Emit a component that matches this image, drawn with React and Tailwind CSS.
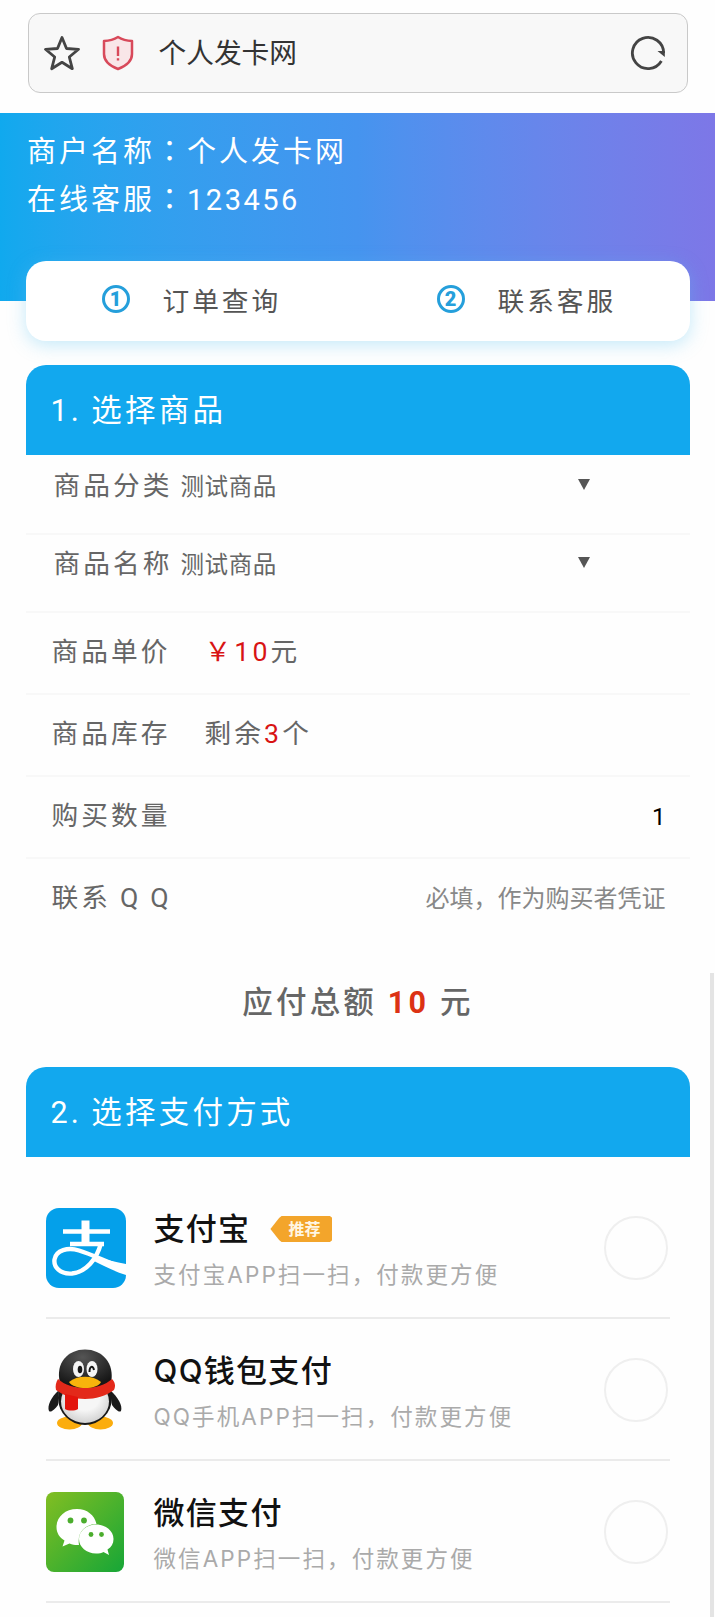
const fields = [
  { label: '商品分类', value: '测试商品' },
  { label: '商品名称', value: '测试商品' },
];

const payments = [
  { id: 'alipay', icon: AlipayIcon, name: '支付宝', desc: '支付宝APP扫一扫，付款更方便', recommended: true },
  { id: 'qq', icon: QQIcon, name: 'QQ钱包支付', desc: 'QQ手机APP扫一扫，付款更方便' },
  { id: 'wechat', icon: WechatIcon, name: '微信支付', desc: '微信APP扫一扫，付款更方便' },
];

function AlipayIcon() {
  return (
    <svg viewBox="0 0 80 80" className="h-20 w-20">
      <rect width="80" height="80" rx="13" fill="#04a0ea" />
      <g fill="none" stroke="#fff">
        <path d="M17 23.5H64M24 36H58" strokeWidth="4.4" />
        <path d="M39.5 12.5V36" strokeWidth="8" />
        <path d="M55 35C51 51 40 64 26 65.5C14 66.5 7.5 59 8.5 51.5C10 42 22 39 33 42.5C48 47 60 54 80 61" strokeWidth="4.4" />
      </g>
      <path d="M49 48C60 52 70 54 80 56V67C67 63 56 57 46 52Z" fill="#fff" />
    </svg>
  );
}

function QQIcon() {
  return (
    <svg viewBox="0 0 80 82" className="h-[82px] w-20">
      <defs>
        <radialGradient id="head" cx="45%" cy="20%" r="75%">
          <stop offset="0" stopColor="#555" />
          <stop offset="1" stopColor="#161616" />
        </radialGradient>
        <radialGradient id="belly" cx="50%" cy="40%" r="60%">
          <stop offset="0.5" stopColor="#f6f6f6" />
          <stop offset="1" stopColor="#d2d2d2" />
        </radialGradient>
      </defs>
      <ellipse cx="23.5" cy="74" rx="12.5" ry="6.5" fill="#fbad0e" />
      <ellipse cx="54.5" cy="74" rx="12.5" ry="6.5" fill="#fbad0e" />
      <path d="M13 41C5 48 1 57 3 62C5 64 9 60 12 56ZM64 41C72 48 77 57 75 62C73 64 69 60 66 56Z" fill="#1b1b1b" />
      <circle cx="39" cy="49" r="27" fill="#191919" />
      <ellipse cx="39" cy="52.5" rx="24" ry="21.5" fill="url(#belly)" />
      <path d="M14 34C9 14 22 0.5 39 0.5S69 14 65 34C55 41 24 41 14 34Z" fill="url(#head)" />
      <path d="M12 30C25 42 53 42 66 30C69 33 70 37 68 41C52 53 26 53 10 41C9 37 10 33 12 30Z" fill="#e3291a" />
      <path d="M19 45L32 48V60C29 62 22 62 19 60Z" fill="#e3140c" />
      <ellipse cx="32.5" cy="20" rx="5.5" ry="8" fill="#f5f5f5" />
      <ellipse cx="46" cy="20" rx="5.5" ry="8" fill="#f5f5f5" />
      <ellipse cx="34" cy="20.5" rx="2.3" ry="3.8" fill="#151515" />
      <path d="M43.5 23C43.5 17 47 16 48 21" fill="none" stroke="#151515" strokeWidth="2" />
      <path d="M23 33C31 26 47 26 55 33C51 41 28 41 23 33Z" fill="#f8b40c" />
    </svg>
  );
}

function WechatIcon() {
  return (
    <svg viewBox="0 0 78 80" className="h-20 w-[78px]">
      <defs>
        <linearGradient id="wx" x1="0" y1="0" x2="1" y2="1">
          <stop offset="0" stopColor="#82be22" />
          <stop offset="1" stopColor="#16a637" />
        </linearGradient>
      </defs>
      <rect width="78" height="80" rx="8" fill="url(#wx)" />
      <path d="M31 17C19 17 10.5 25 10.5 35C10.5 41 13.5 45.5 18.5 48.5L16.5 54.5L23.5 51.5C27 53 30 53.2 33 53C31 41 38 32.5 50.5 32C48.5 23 41 17 31 17Z" fill="#fff" />
      <path d="M50 32.5C40.5 32.5 33 39 33 47S40.5 61.5 50 61.5C53 61.5 55.5 61 57.5 60L63 63L61.5 57.5C65.5 55 67.5 51.5 67.5 47C67.5 39 60 32.5 50 32.5Z" fill="#fff" />
      <g fill="#4bad2d">
        <circle cx="24.5" cy="28.5" r="2.9" />
        <circle cx="38" cy="28.5" r="2.9" />
        <circle cx="45" cy="42.5" r="2.4" />
        <circle cx="55.5" cy="42.5" r="2.4" />
      </g>
    </svg>
  );
}

function AddressBar() {
  return (
    <div className="mx-auto mt-[13px] mb-5 flex h-20 w-[660px] shrink-0 items-center rounded-xl border border-[#c9c9c9] bg-[#f8f8f8] pr-[21px] pl-[15px]">
      <svg viewBox="0 0 36 36" className="h-9 w-9" fill="none" stroke="#444" strokeWidth="2.8" strokeLinejoin="round">
        <path d="M18 2.5L22.5 13.5L34.5 14.3L25.3 22L28.3 33.7L18 27.3L7.7 33.7L10.7 22L1.5 14.3L13.5 13.5Z" />
      </svg>
      <svg viewBox="0 0 32 36" className="ml-[22px] h-9 w-8">
        <path d="M16 2C20 4.5 25 5.8 30 6V19C30 26.5 24 31 16 34C8 31 2 26.5 2 19V6C7 5.8 12 4.5 16 2Z" fill="#f9e6e8" stroke="#d8495a" strokeWidth="2.5" strokeLinejoin="round" />
        <path d="M16 11.5V21M16 23.3V25.5" stroke="#d8495a" strokeWidth="2.4" />
      </svg>
      <span className="ml-[25px] flex-1 pt-0.5 text-[27.7px] leading-[40px] text-[#333]">个人发卡网</span>
      <svg viewBox="0 0 36 36" className="h-9 w-9">
        <path d="M31.4 26A15.6 15.6 0 1 1 33.6 18" fill="none" stroke="#444" strokeWidth="2.8" />
        <path d="M27.5 16H34.8V22Z" fill="#444" />
      </svg>
    </div>
  );
}

function QuickLink({ num, text }) {
  return (
    <div className="flex w-[335px] shrink-0 items-center">
      <span className="-mt-1 flex h-7 w-7 items-center justify-center rounded-full border-[3.5px] border-[#259fdb] text-[20px] leading-none font-black text-[#259fdb]">
        {num}
      </span>
      <span className="ml-[33px] pt-0.5 text-[26.7px] tracking-[3px] text-[#555]">{text}</span>
    </div>
  );
}

function SectionTitle({ children }) {
  return (
    <h2 className="flex h-[90px] items-center rounded-t-[20px] bg-[#12a8ee] pt-0.5 pl-[25px] text-[30.5px] tracking-[3.2px] [word-spacing:-1.5px] text-white">
      {children}
    </h2>
  );
}

// full-width colon centred in its cell
function Colon() {
  return <span className="font-['Roboto','Noto_Sans_CJK_TC',sans-serif]">：</span>;
}

export default function App() {
  return (
    <div className="relative flex h-[1617px] w-[715px] flex-col overflow-hidden bg-[#fefefe] font-['Roboto','Noto_Sans_CJK_SC',sans-serif]">
      <AddressBar />

      <header className="h-[188px] shrink-0 bg-linear-to-r from-[#10a9ee] via-[#4594ef] to-[#7d77e7] pt-[15px] pl-[27px] text-[29px] leading-[48px] tracking-[3px] text-white">
        <p>商户名称<Colon />个人发卡网</p>
        <p>在线客服<Colon /><span className="tracking-[2.5px]">123456</span></p>
      </header>

      <nav className="mx-auto -mt-10 flex h-20 w-[664px] shrink-0 items-center rounded-[20px] bg-white pl-[76px] shadow-[0_4px_18px_rgba(90,195,240,0.35)]">
        <QuickLink num="1" text="订单查询" />
        <QuickLink num="2" text="联系客服" />
      </nav>

      <main className="mx-auto mt-6 w-[664px] text-[26.7px] tracking-[3.1px] text-[#666]">
        <SectionTitle>1. 选择商品</SectionTitle>

        {fields.map((f, i) => (
          <div key={f.label} className={`flex border-b-2 border-[#f8f8f8] pl-7 leading-[40px] ${i === 0 ? 'h-[80px] pt-[11px]' : 'h-[78px] pt-[9px]'}`}>
            <span className="w-[127px]">{f.label}</span>
            <span className="w-[397px] pt-px text-[23.5px] tracking-[0.6px]">{f.value}</span>
            <svg viewBox="0 0 12 11" className="mt-[13px] h-[11px] w-3">
              <path d="M0 0H12L6 11Z" fill="#555" />
            </svg>
          </div>
        ))}

        <div className="flex h-[82px] items-center border-b-2 border-[#f8f8f8] pb-0.5 pl-[26px]">
          <span className="w-[153px]">商品单价</span>
          <span className="text-[#d81414]">￥10</span>元
        </div>
        <div className="flex h-[82px] items-center border-b-2 border-[#f8f8f8] pb-0.5 pl-[26px]">
          <span className="w-[153px]">商品库存</span>
          剩余<span className="text-[#d81414]">3</span>个
        </div>
        <div className="flex h-[82px] items-center justify-between border-b-2 border-[#f8f8f8] pr-6 pb-0.5 pl-[26px]">
          <span>购买数量</span>
          <span className="pt-0.5 text-2xl tracking-normal text-black">1</span>
        </div>
        <div className="flex h-[82px] items-center justify-between pr-6 pb-1 pl-[26px]">
          <span className="[word-spacing:-0.8px]">联系 Q Q</span>
          <span className="pt-0.5 text-2xl tracking-normal text-[#888]">必填，作为购买者凭证</span>
        </div>

        <div className="flex h-[126px] items-center justify-center pb-0.5 pl-px text-[30.5px] tracking-[3.2px] font-medium text-[#666]">
          <span className="whitespace-pre">应付总额 <b className="font-bold text-[#dc3214]">10</b> 元</span>
        </div>

        <SectionTitle>2. 选择支付方式</SectionTitle>

        <div className="px-5 pt-5 font-['Inter','Noto_Sans_CJK_SC',sans-serif]">
          {payments.map(({ id, icon: Icon, name, desc, recommended }) => (
            <div key={id} className="flex h-[142px] items-center border-b-2 border-[#ebebeb]">
              <div className="w-[108px] pt-0.5"><Icon /></div>
              <div className="flex-1 pt-2">
                <div className="flex h-12 items-center text-[31px] leading-[48px] tracking-[1.3px] font-medium text-[#111]">
                  {name}
                  {recommended && (
                    <span className="ml-5 flex h-[26px] w-[62px] items-center justify-center bg-[#f3a52b] pl-1.5 text-base leading-none tracking-normal font-bold text-[#fff6e4] [clip-path:polygon(0_50%,14%_8%,18%_0,96%_0,100%_8%,100%_92%,96%_100%,18%_100%,14%_92%)]">
                      推荐
                    </span>
                  )}
                </div>
                <p className="h-11 text-[22.5px] leading-[44px] tracking-[2.1px] text-[#aaa]">{desc}</p>
              </div>
              <span className="mt-0.5 mr-0.5 h-16 w-16 rounded-full border-2 border-[#efefef]" />
            </div>
          ))}
        </div>
      </main>

      {/* page scrollbar */}
      <div className="absolute top-[973px] right-px h-[644px] w-1 bg-[#e4e4e4]" />
    </div>
  );
}
